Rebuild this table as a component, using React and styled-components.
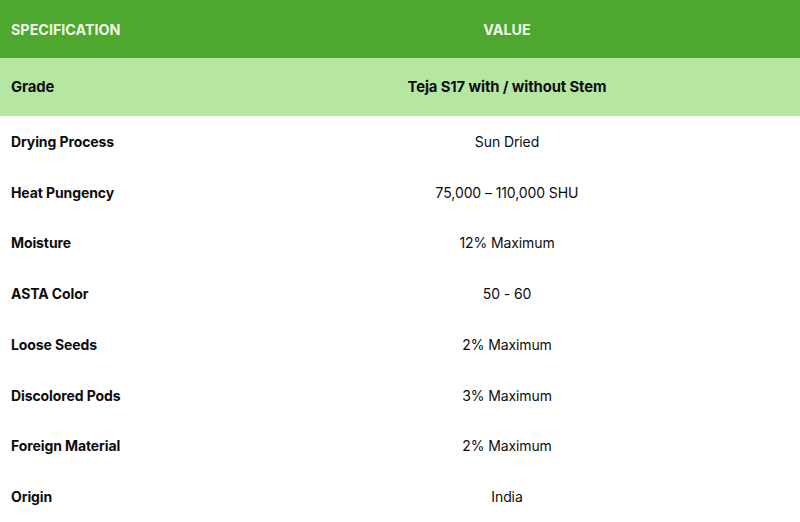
import React from "react";
import styled, { createGlobalStyle } from "styled-components";

const GlobalStyle = createGlobalStyle`
  html, body {
    margin: 0;
    padding: 0;
    background: #ffffff;
  }
  body {
    font-family: Inter, "Noto Sans", "Liberation Sans", sans-serif;
  }
`

const Table = styled.div`
  width: 800px;
  display: grid;
  grid-template-columns: 214px 1fr;
`

const Row = styled.div`
  display: contents;
`

const Cell = styled.div`
  display: flex;
  align-items: center;
  justify-content: ${(p) => (p.$value ? "center" : "flex-start")};
  padding-left: ${(p) => (p.$value ? "0" : "11px")};
  height: ${(p) => (p.$tall ? "58px" : "50.75px")};
  background: ${(p) => p.$bg || "#ffffff"};
  color: ${(p) => p.$color || "#0d0d0d"};
  font-size: ${(p) => p.$size || "14px"};
  font-weight: ${(p) => (p.$bold ? 700 : 400)};
  letter-spacing: -0.1px;
`

const HeaderCell = styled(Cell)`
  letter-spacing: 0;
  text-transform: uppercase;
`

const specs = [
  ["Drying Process", "Sun Dried"],
  ["Heat Pungency", "75,000 – 110,000 SHU"],
  ["Moisture", "12% Maximum"],
  ["ASTA Color", "50 - 60"],
  ["Loose Seeds", "2% Maximum"],
  ["Discolored Pods", "3% Maximum"],
  ["Foreign Material", "2% Maximum"],
  ["Origin", "India"],
];

export default function App() {
  return (
    <>
      <GlobalStyle />
      <Table>
        <Row>
          <HeaderCell $tall $bold $size="14.3px" $bg="#4ea72e" $color="#eef7e8">Specification</HeaderCell>
          <HeaderCell $tall $bold $value $size="14.3px" $bg="#4ea72e" $color="#eef7e8">Value</HeaderCell>
        </Row>
        <Row>
          <Cell $tall $bold $size="14.8px" $bg="#b5e6a2">Grade</Cell>
          <Cell $tall $bold $value $size="14.8px" $bg="#b5e6a2">Teja S17 with / without Stem</Cell>
        </Row>
        {specs.map(([name, value]) => (
          <Row key={name}>
            <Cell $bold>{name}</Cell>
            <Cell $value>{value}</Cell>
          </Row>
        ))}
      </Table>
    </>
  );
}
